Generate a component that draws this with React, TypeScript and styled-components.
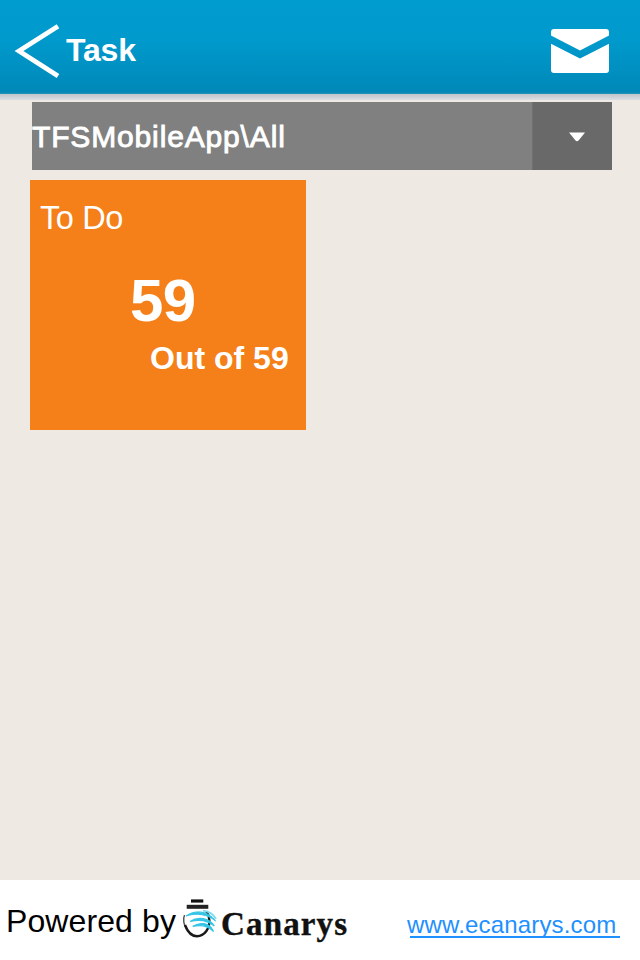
import React from "react";
import styled, { createGlobalStyle } from "styled-components";

const GlobalStyle = createGlobalStyle`
  * { box-sizing: border-box; }
  body { margin: 0; background: #eee9e3; }
`;

const Screen = styled.div`
  width: 640px;
  height: 960px;
  display: flex;
  flex-direction: column;
  background: #eee9e3;
  font-family: "Liberation Sans", Arial, sans-serif;
  overflow: hidden;
`;

const Header = styled.header`
  height: 94px;
  flex: none;
  display: flex;
  align-items: flex-start;
  padding: 0 31px 0 14px;
  background: linear-gradient(#009bcf 0, #009acd 38px, #008aba 88px, #0088b8 92px, #2b91b5 94px);
`;

const HeaderShade = styled.div`
  height: 8px;
  flex: none;
  background: linear-gradient(#bfc5cb 0, #cdd1d6 3px, #dcdfe3 6px, #eee9e3 6px);
`;

const BackButton = styled.button`
  display: block;
  border: 0;
  padding: 0;
  background: none;
  width: 46px;
  height: 56px;
  margin-top: 23px;
`;

const MailButton = styled(BackButton)`
  width: 58px;
  height: 46px;
  margin: 28px 0 0 auto;
`;

const Title = styled.h1`
  margin: 30px 0 0 6px;
  font-size: 32px;
  line-height: 40px;
  letter-spacing: -0.2px;
  font-weight: 700;
  color: #fff;
`;

const Main = styled.main`
  flex: 1;
  padding-left: 30px;
`;

const Picker = styled.div`
  display: flex;
  width: 580px;
  height: 68px;
  margin-left: 2px;
  background: #808080;
  color: #fff;
`;

const PickerLabel = styled.span`
  flex: 1;
  padding-top: 1px;
  font-size: 30px;
  line-height: 68px;
  letter-spacing: 0.85px;
  white-space: nowrap;
  -webkit-text-stroke: 0.9px #fff;
`;

const PickerToggle = styled.span`
  width: 80px;
  background: #696969;
  border-left: 1px solid #707070;
  display: flex;
  align-items: center;
  justify-content: center;
  padding-left: 8px;
  padding-top: 1px;
`;

const Card = styled.section`
  width: 276px;
  height: 250px;
  margin-top: 10px;
  padding-top: 18px;
  background: #f57f18;
  color: #fff;
`;

const CardTitle = styled.h2`
  margin: 0 0 0 10px;
  font-size: 32.5px;
  line-height: 40px;
  letter-spacing: -0.4px;
  font-weight: 400;
`;

const Count = styled.div`
  margin: 28px 0 0 100px;
  font-size: 60px;
  line-height: 70px;
  letter-spacing: -0.5px;
  font-weight: 700;
`;

const Total = styled.div`
  margin: 2px 0 0 120px;
  font-size: 32px;
  line-height: 40px;
  font-weight: 700;
  white-space: nowrap;
`;

const Footer = styled.footer`
  height: 80px;
  flex: none;
  display: flex;
  align-items: flex-start;
  background: #fff;
`;

const Powered = styled.span`
  width: 182px;
  padding: 21px 0 0 6px;
  font-size: 32px;
  line-height: 40px;
  letter-spacing: 0.1px;
  white-space: nowrap;
  color: #000;
`;

const Brand = styled.div`
  width: 225px;
  display: flex;
  gap: 3px;
`;

const BrandMark = styled.svg`
  margin-top: 17px;
  flex: none;
`;

const BrandName = styled.span`
  padding-top: 24px;
  font-family: "Liberation Serif", "Times New Roman", serif;
  font-weight: 700;
  font-size: 33px;
  line-height: 40px;
  letter-spacing: 1.15px;
  color: #111;
  -webkit-text-stroke: 0.4px #111;
`;

const SiteLink = styled.a`
  width: 213px;
  height: 58px;
  padding-top: 25px;
  font-size: 24px;
  line-height: 40px;
  letter-spacing: 0.17px;
  white-space: nowrap;
  text-decoration: none;
  color: #1e90ff;
  background: linear-gradient(#1e90ff, #1e90ff) 3px 56px / 210px 2px no-repeat;
`;

export default function App() {
  return (
    <Screen>
      <GlobalStyle />
      <Header>
        <BackButton aria-label="Back">
          <svg width="46" height="56" viewBox="0 0 46 56" fill="none">
            <path d="M44 3.2 L5 28 L44 53" stroke="#fff" strokeWidth="4.8" />
          </svg>
        </BackButton>
        <Title>Task</Title>
        <MailButton aria-label="Messages">
          <svg width="58" height="46" viewBox="0 0 58 46" fill="#fff">
            <path d="M3 1H55Q58 1 58 4V7.5L29 22.5L0 7.5V4Q0 1 3 1Z" />
            <path d="M0 15.8L29 30.5L58 15.8V42Q58 45 55 45H3Q0 45 0 42Z" />
          </svg>
        </MailButton>
      </Header>
      <HeaderShade />
      <Main>
        <Picker>
          <PickerLabel>TFSMobileApp\All</PickerLabel>
          <PickerToggle>
            <svg width="16" height="10" viewBox="0 0 16 10">
              <path d="M0 .5H16L9.5 8.5Q8 10 6.5 8.5Z" fill="#fff" />
            </svg>
          </PickerToggle>
        </Picker>
        <Card>
          <CardTitle>To Do</CardTitle>
          <Count>59</Count>
          <Total>Out of 59</Total>
        </Card>
      </Main>
      <Footer>
        <Powered>Powered by</Powered>
        <Brand>
          <BrandMark width="36" height="42" viewBox="0 0 36 42" fill="none">
            <path d="M9 4H21.3" stroke="#111" strokeWidth="3.2" />
            <path d="M4.7 9.8H26.3" stroke="#222" strokeWidth="4" />
            <path d="M2.6 18C.6 22 1.8 28 4.5 32" stroke="#555" strokeWidth="1.5" />
            <path d="M3 28C6 36 10 39.3 15 39.3C22.5 39.3 28 31.5 27.3 23C27 19 26 16.5 24.3 14.5" stroke="#181818" strokeWidth="2.4" />
            <path d="M4 19C12 12.8 26 13 33.5 24C26 17.5 15 15.5 4 19Z" fill="#35c4e6" stroke="#35c4e6" strokeWidth="1" />
            <path d="M21 13.6C28 14.5 32 18 34 22" stroke="#7bdcf0" strokeWidth="1.8" />
            <path d="M8 24.5C16 19.3 27 20.5 32.3 29C26 23.5 17 22.2 8 24.5Z" fill="#35c4e6" stroke="#35c4e6" strokeWidth="1.2" />
            <path d="M10.7 29.3C19 24.6 28 25.5 31.5 34.5C26 28.4 19 27.5 10.7 29.3Z" fill="#35c4e6" stroke="#35c4e6" strokeWidth="1.2" />
          </BrandMark>
          <BrandName>Canarys</BrandName>
        </Brand>
        <SiteLink href="#">www.ecanarys.com</SiteLink>
      </Footer>
    </Screen>
  );
}
